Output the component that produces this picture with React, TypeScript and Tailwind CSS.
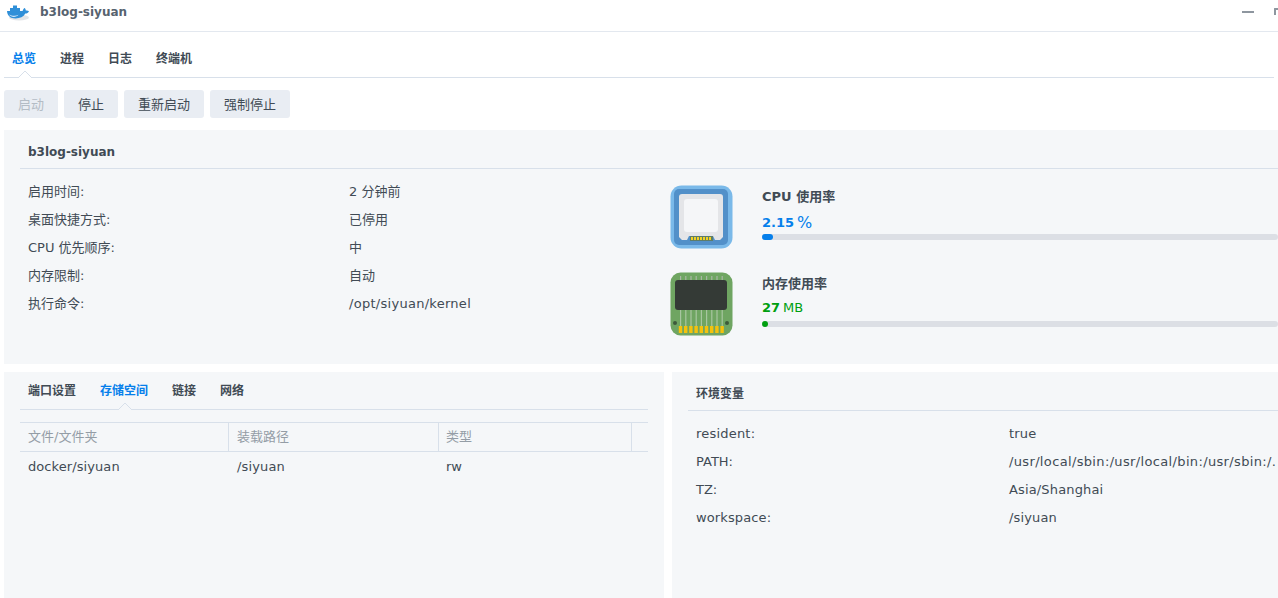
import React from "react";

const font = { fontFamily: '"DejaVu Sans","Noto Sans CJK SC",sans-serif' };

function Whale() {
  return (
    <svg width="24" height="18" viewBox="0 0 24 18" className="shrink-0">
      <ellipse cx="13" cy="14.500" rx="10" ry="3" fill="#d5dade" opacity="0.7" />
      <path d="M1 8h3V5h3V2.500h4V5h3v3h2.600c.4-1.600 1.300-2.700 2.200-3 .7.900 1 1.800 1 2.600 1.200-.3 2.400 0 3.200.6-.7 1.500-2 2.300-3.700 2.400C17.600 14 14 15.500 9.600 15.500 4.500 15.500 1.300 12.800 1 8z" fill="#2f8fd8" />
      <path d="M3 11.500c3 1.600 7 1.600 9.500 .3-2 2.700-7.500 3-9.500-.3z" fill="#cfe6f7" />
    </svg>
  );
}

function CpuIcon() {
  return (
    <svg width="64" height="64" viewBox="0 0 64 64" className="shrink-0">
      <rect x="0.500" y="0.500" width="62" height="63" rx="11" fill="#7ab9e9" />
      <rect x="4" y="4" width="54" height="56" rx="5" fill="#5290c9" />
      <path d="M9 12a3 3 0 0 1 3-3h38a3 3 0 0 1 3 3v40l-3 3h-5l-2-4H19l-2 4h-5l-3-3z" fill="#e4e5e8" />
      <rect x="14" y="14" width="34" height="33" rx="3" fill="#f5f6f8" />
      <rect x="20" y="51" width="23" height="5" fill="#5d7d6a" />
      <path d="M21 52h2v3h-2zM24 52h2v3h-2zM27 52h2v3h-2zM30 52h2v3h-2zM33 52h2v3h-2zM36 52h2v3h-2zM39 52h2v3h-2z" fill="#f2d224" />
    </svg>
  );
}

function RamIcon() {
  const xs = [10, 15.2, 20.4, 25.6, 30.8, 36, 41.2, 46.4, 51.6];
  return (
    <svg width="64" height="64" viewBox="0 0 64 64" className="shrink-0">
      <rect x="0.500" y="0.500" width="62" height="63" rx="10" fill="#6fa562" />
      {xs.map((x) => (
        <rect key={"t" + x} x={x} y="4" width="1.200" height="5" fill="#a9b6a4" />
      ))}
      {xs.map((x) => (
        <rect key={"l" + x} x={x} y="37" width="1.200" height="18" fill="#a7c6a0" />
      ))}
      <rect x="5" y="8" width="52" height="30" rx="3" fill="#343a36" />
      {xs.map((x) => (
        <rect key={"g" + x} x={x - 1.200} y="54" width="3.400" height="7" fill="#f4c20d" />
      ))}
      <circle cx="5" cy="51" r="2" fill="#3d5a3a" />
      <circle cx="57" cy="51" r="2" fill="#3d5a3a" />
    </svg>
  );
}

function Caret({ className }: { className: string }) {
  return (
    <svg width="14" height="7" viewBox="0 0 14 7" className={"absolute " + className}>
      <path d="M0 7 L7 0 L14 7" fill="#ffffff" stroke="#d8e0ea" strokeWidth="1" />
    </svg>
  );
}

function Row({ k, v, vx, kt, vt }: { k: string; v: string; vx: string; kt?: string; vt?: string }) {
  return (
    <div className="flex h-7 items-center whitespace-nowrap text-[13px] text-[#414b55]">
      <div className={vx + " shrink-0 " + (kt ?? "")}>{k}</div>
      <div className={vt ?? ""}>{v}</div>
    </div>
  );
}

function Btn({ children, disabled }: { children: string; disabled?: boolean }) {
  return (
    <div
      className={
        "flex h-7 items-center rounded-[3px] bg-[#e9edf3] px-[14px] pt-[1px] text-[13px] " +
        (disabled ? "text-[#b4bcc5]" : "text-[#414b55]")
      }
    >
      {children}
    </div>
  );
}

function Meter({
  icon,
  title,
  value,
  unit,
  color,
  pct,
  h,
  unitSize,
  valueRow,
}: {
  icon: React.ReactNode;
  title: string;
  value: string;
  unit: string;
  color: string;
  pct: string;
  h: string;
  unitSize: string;
  valueRow: string;
}) {
  return (
    <div className={"flex gap-[28px] " + h}>
      {icon}
      <div className="w-[516px] pt-[3px]">
        <div className="h-[18px] text-[13px] font-semibold leading-[18px] text-[#414b55]">{title}</div>
        <div className={"flex h-[18px] items-center gap-[3px] text-[13px] " + valueRow + " " + color}>
          <span className="font-bold">{value}</span>
          <span className={unitSize}>{unit}</span>
        </div>
        <div className="h-[6px] rounded-[3px] bg-[#dcdfe5]">
          <div className={"h-[6px] rounded-[3px] " + pct} />
        </div>
      </div>
    </div>
  );
}

export default function App() {
  return (
    <div style={font} className="h-[598px] w-[1278px] overflow-hidden bg-white">
      <div className="flex h-8 items-center border-b border-[#e3e8ef] pb-[8px] pl-[6px] pr-[24px]">
        <Whale />
        <div className="ml-[10px] text-[12px] font-bold text-[#57636f]">b3log-siyuan</div>
        <div className="ml-auto h-[2px] w-3 bg-[#8e969f]" />
        <div className="-mr-[24px] ml-[20px] h-[7px] w-[4px] rounded-tl-[1px] border-l-2 border-t-2 border-[#8e969f]" />
      </div>

      <div className="relative mx-[4px] flex h-[46px] items-center gap-[24px] border-b border-[#d8e0ea] pl-[8px] pt-[8px] text-[12px] font-bold text-[#414b55]">
        <span className="text-[#057feb]">总览</span>
        <span>进程</span>
        <span>日志</span>
        <span>终端机</span>
        <Caret className="bottom-[-1px] left-[14px]" />
      </div>

      <div className="ml-[4px] mt-[12px] flex gap-[6px]">
        <Btn disabled>启动</Btn>
        <Btn>停止</Btn>
        <Btn>重新启动</Btn>
        <Btn>强制停止</Btn>
      </div>

      <div className="ml-[4px] mt-[12px] h-[234px] bg-[#f5f7f9] pl-[16px]">
        <div className="flex h-[39px] items-center border-b border-[#d8e0ea] pl-[8px] pt-[5px] text-[12px] font-bold text-[#414b55]">
          b3log-siyuan
        </div>
        <div className="flex pt-[9px]">
          <div className="w-[651px] pl-[8px]">
            <Row vx="w-[321px]" k="启用时间:" v="2 分钟前" />
            <Row vx="w-[321px]" k="桌面快捷方式:" v="已停用" />
            <Row vx="w-[321px]" k="CPU 优先顺序:" v="中" />
            <Row vx="w-[321px]" k="内存限制:" v="自动" />
            <Row vx="w-[321px]" k="执行命令:" v="/opt/siyuan/kernel" vt="tracking-[0.28px]" />
          </div>
          <div className="pt-[7px]">
            <Meter
              h="h-[87px]"
              icon={<CpuIcon />}
              title="CPU 使用率"
              value="2.15"
              unit="%"
              unitSize="text-[16px]"
              valueRow="mt-[8px] mb-[2px]"
              color="text-[#057feb]"
              pct="w-[11px] bg-[#057feb]"
            />
            <Meter
              h="h-[64px]"
              icon={<RamIcon />}
              title="内存使用率"
              value="27"
              unit="MB"
              unitSize=""
              valueRow="mt-[6px] mb-[4px]"
              color="text-[#009f10]"
              pct="w-[6px] bg-[#009f10]"
            />
          </div>
        </div>
      </div>

      <div className="ml-[4px] mt-[8px] flex h-[226px] gap-[8px]">
        <div className="w-[660px] shrink-0 bg-[#f5f7f9] pl-[16px] pr-[16px]">
          <div className="relative flex h-[38px] items-center gap-[24px] border-b border-[#d8e0ea] pl-[8px] text-[12px] font-bold text-[#414b55]">
            <span>端口设置</span>
            <span className="text-[#057feb]">存储空间</span>
            <span>链接</span>
            <span>网络</span>
            <Caret className="bottom-[-1px] left-[98px] [&>path]:fill-[#f5f7f9]" />
          </div>
          <div className="mt-[12px] flex h-[30px] border-y border-[#d8e0ea] text-[13px] text-[#949da6]">
            <div className="flex w-[209px] items-center border-r border-[#d8e0ea] pl-[8px]">文件/文件夹</div>
            <div className="flex w-[210px] items-center border-r border-[#d8e0ea] pl-[8px]">装载路径</div>
            <div className="flex w-[193px] items-center border-r border-[#d8e0ea] pl-[7px]">类型</div>
          </div>
          <div className="flex h-[28px] items-center pt-[1px] text-[13px] text-[#414b55]">
            <div className="w-[209px] pl-[8px] tracking-[0.08px]">docker/siyuan</div>
            <div className="w-[210px] pl-[8px] tracking-[0.15px]">/siyuan</div>
            <div className="pl-[7px]">rw</div>
          </div>
        </div>
        <div className="w-[640px] shrink-0 overflow-hidden bg-[#f5f7f9] pl-[16px]">
          <div className="flex h-[39px] items-center border-b border-[#d8e0ea] pl-[8px] pt-[5px] text-[12px] font-bold text-[#414b55]">
            环境变量
          </div>
          <div className="pl-[8px] pt-[9px]">
            <Row vx="w-[313px]" k="resident:" v="true" kt="tracking-[0.2px]" vt="tracking-[0.2px]" />
            <Row vx="w-[313px]" k="PATH:" v="/usr/local/sbin:/usr/local/bin:/usr/sbin:/." vt="tracking-[0.35px]" />
            <Row vx="w-[313px]" k="TZ:" v="Asia/Shanghai" vt="tracking-[0.15px]" />
            <Row vx="w-[313px]" k="workspace:" v="/siyuan" kt="tracking-[0.12px]" vt="tracking-[0.15px]" />
          </div>
        </div>
      </div>
    </div>
  );
}
